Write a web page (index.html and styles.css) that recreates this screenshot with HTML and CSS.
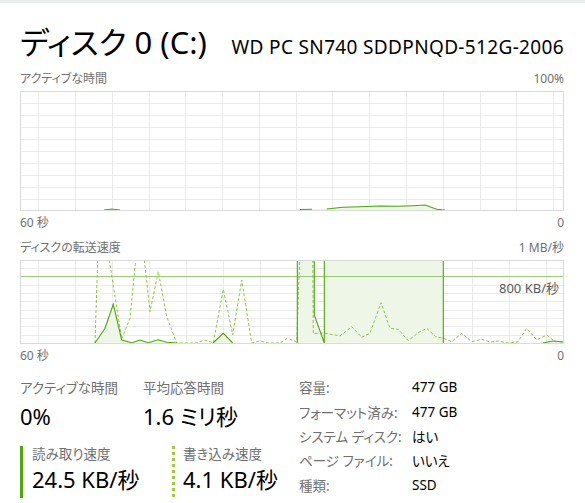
FILE: index.html
```html
<!DOCTYPE html>
<html lang="ja">
<head>
	<meta charset="utf-8" />
	<title>ディスク 0 (C:)</title>
	<link rel="stylesheet" href="styles.css">
</head>
<body>
	<header class="head">
		<h1 class="disk-name">ディスク 0 (C:)</h1>
		<span class="disk-model">WD PC SN740 SDDPNQD-512G-2006</span>
	</header>

	<section class="graph">
		<div class="graph-labels"><span>アクティブな時間</span><span>100%</span></div>
		<svg class="plot" width="545" height="120" viewBox="0 0 545 120">
			<path class="grid" d="M18.5 0V120M55.5 0V120M92.5 0V120M129.5 0V120M165.5 0V120M202.5 0V120M239.5 0V120M276.5 0V120M312.5 0V120M349.5 0V120M386.5 0V120M423.5 0V120M460.5 0V120M496.5 0V120M533.5 0V120M0 12.5H544M0 24.5H544M0 36.5H544M0 48.5H544M0 60.5H544M0 72.5H544M0 84.5H544M0 96.5H544M0 108.5H544" />
			<path class="fill" d="M84 119L92 118L100 119ZM280 119L292 118.3L306.7 118L323 116.3L340 115.7L360 115L376.7 115.3L393 114.7L405 114L416.7 118.3L425 119Z" />
			<path class="line-read" d="M84 119L92 118L100 119M280 118.5L292 118.3M306.7 118L323 116.3L340 115.7L360 115L376.7 115.3L393 114.7L405 114L416.7 118.3L425 119" />
			<rect class="frame" x="0.5" y="0.5" width="543" height="118.5" />
		</svg>
		<div class="graph-labels"><span>60 秒</span><span>0</span></div>
	</section>

	<section class="graph graph-transfer">
		<div class="graph-labels"><span>ディスクの転送速度</span><span>1 MB/秒</span></div>
		<div class="plot-wrap">
			<svg class="plot" width="545" height="84" viewBox="0 0 545 84">
				<path class="grid" d="M18.5 0V84M55.5 0V84M92.5 0V84M129.5 0V84M166.5 0V84M203.5 0V84M240.5 0V84M277.5 0V84M309.5 0V84M342.5 0V84M378.5 0V84M415.5 0V84M452.5 0V84M489.5 0V84M526.5 0V84M0 8.5H544M0 25.5H544M0 33.5H544M0 41.5H544M0 50.5H544M0 58.5H544M0 66.5H544M0 75.5H544" />
				<path class="fill" d="M75 83L85 68.3L93.3 44.3L101.7 80L111.7 82.7L120 80L128.3 82.7L138.3 79.7L146.7 82.3L156.7 83ZM193 83L203.3 73.3L212.7 83ZM277.3 83V0H294.3V55L304.3 83V0H423.3V83Z" />
				<path class="peak" d="M0 16.5H544" />
				<path class="line-write" d="M75 83L78 -10M87.7 -10L101.7 79L110 58L116.7 -10M123.3 -10L130 51.7L138.3 11.7L146.7 56.7L156.7 83L163 83L176.7 83L185 80L193.3 83L203.3 29.3L212.7 75L221.7 20L231.7 83L240 81L248.3 83L260 83L267.3 78.3L276.7 82L280 -10M292.7 -10L293.3 73.5L304 73L320 76L331.7 66.7L341.7 77.3L350 73.3L361 42.7L370 68.3L378.3 69.3L388.3 80.7L398.3 72.7L406.7 68.3L415.7 76.7L423.3 78.3L431.7 81.7L441.7 73.3L451.7 81.7L461.7 79.3L470 82L478.3 81L488.3 83L497.7 82L506.7 68.3L516.7 80L526.7 75L535 81.7L544 82" />
				<path class="line-read" d="M75 83L85 68.3L93.3 44.3L101.7 80L111.7 82.7L120 80L128.3 82.7L138.3 79.7L146.7 82.3L156.7 83M193 83L203.3 73.3L212.7 83M277.3 83V-10M294.3 -10V55L304.3 83V-10M423.3 -10V83M523 83L533 81L544 82" />
				<rect class="frame" x="0.5" y="0.5" width="543" height="82.5" />
			</svg>
			<span class="plot-note">800 KB/秒</span>
		</div>
		<div class="graph-labels"><span>60 秒</span><span>0</span></div>
	</section>

	<section class="stats">
		<div class="stats-main">
			<div class="stat-row">
				<div class="stat stat-active">
					<div class="stat-label">アクティブな時間</div>
					<div class="stat-value">0%</div>
				</div>
				<div class="stat">
					<div class="stat-label">平均応答時間</div>
					<div class="stat-value">1.6 ミリ秒</div>
				</div>
			</div>
			<div class="stat-row rate-row">
				<div class="stat rate rate-read">
					<div class="stat-label">読み取り速度</div>
					<div class="stat-value">24.5 KB/秒</div>
				</div>
				<div class="stat rate rate-write">
					<div class="stat-label">書き込み速度</div>
					<div class="stat-value">4.1 KB/秒</div>
				</div>
			</div>
		</div>
		<dl class="props">
			<dt>容量:</dt><dd>477 GB</dd>
			<dt>フォーマット済み:</dt><dd>477 GB</dd>
			<dt>システム ディスク:</dt><dd>はい</dd>
			<dt>ページ ファイル:</dt><dd>いいえ</dd>
			<dt>種類:</dt><dd>SSD</dd>
		</dl>
	</section>
</body>
</html>
```

FILE: styles.css
```css
body {
	margin: 0;
	padding: 0 21px 0 20px;
	background-color: #fff;
	color: #000;
	border-top: 3px solid #eceeee;
	font-family: "Noto Sans", "Noto Sans CJK JP", sans-serif;
	font-feature-settings: "palt";
}

.head {
	display: flex;
	justify-content: space-between;
	align-items: baseline;
	margin-top: 19px;
	height: 40px;
}

.disk-name {
	margin: 0;
	font-size: 31px;
	font-weight: normal;
	line-height: 40px;
}

.disk-model {
	font-size: 19px;
	letter-spacing: 0.35px;
	line-height: 40px;
}

.graph-labels {
	display: flex;
	justify-content: space-between;
	font-size: 12px;
	line-height: 16px;
	color: #707070;
	margin-top: 9px;
}

.plot {
	display: block;
	margin-top: 4px;
}

.plot + .graph-labels {
	margin-top: 4px;
}

.plot-wrap {
	position: relative;
}

.plot-wrap + .graph-labels {
	margin-top: 4px;
}

.plot-note {
	position: absolute;
	right: 5px;
	top: 20px;
	font-size: 13px;
	line-height: 16px;
	color: #595959;
}

.grid {
	fill: none;
	stroke: #ebebeb;
	stroke-width: 1;
	shape-rendering: crispEdges;
}

.frame {
	fill: none;
	stroke: #dadada;
	stroke-width: 1;
	shape-rendering: crispEdges;
}

.fill {
	fill: #eef6e8;
}

.peak {
	stroke: #9ccc78;
	stroke-width: 1;
	shape-rendering: crispEdges;
}

.line-read {
	fill: none;
	stroke: #4da60c;
	stroke-width: 1.1;
}

.line-write {
	fill: none;
	stroke: #8cc63f;
	stroke-width: 1;
	stroke-dasharray: 3 2;
}

.stats {
	display: flex;
	margin-top: 14px;
}

.stats-main {
	width: 279px;
}

.stat-row {
	display: flex;
}

.stat-active {
	width: 123px;
}

.stat-label {
	font-size: 13.5px;
	line-height: 20px;
	color: #707070;
}

.stat-value {
	font-size: 22px;
	line-height: 36px;
}

.rate-row {
	margin-top: 12px;
}

.rate {
	height: 52px;
	padding-left: 9px;
}

.rate .stat-label {
	line-height: 16px;
}

.rate .stat-value {
	line-height: 34px;
}

.rate-read {
	width: 140px;
	border-left: 3px solid #4da60c;
}

.rate-write {
	padding-left: 11px;
	background: repeating-linear-gradient(to bottom, #9ccc3c 0 3px, transparent 3px 6px) no-repeat left top / 3px 100%;
}

.props {
	display: grid;
	grid-template-columns: 113px auto;
	grid-auto-rows: 24.4px;
	align-items: center;
	margin: -3px 0 0 0;
	font-size: 13.5px;
}

.props dt {
	color: #707070;
}

.props dd {
	margin: 0;
}
```
